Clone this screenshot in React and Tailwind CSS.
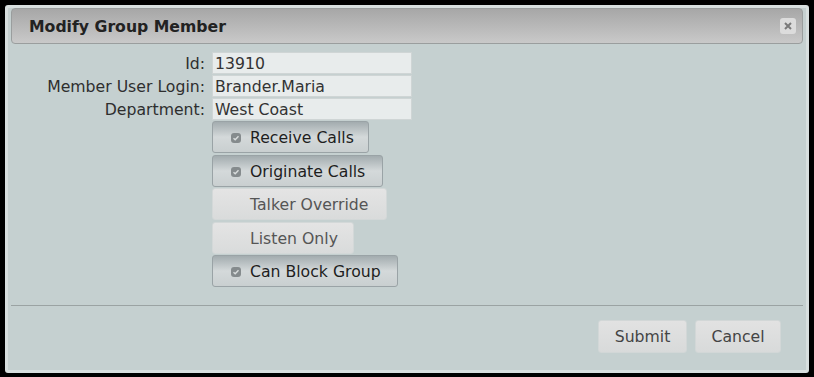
import React from "react";

const font = { fontFamily: '"DejaVu Sans", Verdana, sans-serif' };

function CheckIcon() {
  return (
    <span className="flex h-[10px] w-[10px] items-center justify-center rounded-[3px] bg-[#858b8d]">
      <svg width="8" height="8" viewBox="0 0 8 8">
        <path d="M1.5 4.2 L3.2 5.8 L6.5 2.2" stroke="#d9dddd" strokeWidth="1.4" fill="none" />
      </svg>
    </span>
  );
}

function Toggle({ label, active, width }) {
  return (
    <div
      className={
        "flex h-[32px] items-center rounded-[3px] border pl-[18px] pt-[2px] " +
        (active
          ? "border-[#9aa3a6] bg-gradient-to-b from-[#a3acaf] via-[#d4d9da] to-[#c9cfd0] text-[#1e1e1e]"
          : "border-[#d3d8d8] bg-gradient-to-b from-[#e4e4e4] to-[#d9dbdb] text-[#555]")
      }
      style={{ width }}
    >
      <span className="w-[10px]">{active && <CheckIcon />}</span>
      <span className="ml-[9px]">{label}</span>
    </div>
  );
}

const fields = [
  ["Id:", "13910"],
  ["Member User Login:", "Brander.Maria"],
  ["Department:", "West Coast"],
];

const toggles = [
  ["Receive Calls", true, 157],
  ["Originate Calls", true, 171],
  ["Talker Override", false, 175],
  ["Listen Only", false, 142],
  ["Can Block Group", true, 186],
];

export default function App() {
  return (
    <div className="h-[377px] w-[814px] bg-black pl-[5px] pt-[5px]" style={font}>
      <div className="flex h-[368px] w-[804px] flex-col rounded-[3px] border-[3px] border-[#d8dfdf] bg-[#c5d0d0] px-[3px] text-[15.7px]">
        <div className="flex h-[36px] items-center justify-between rounded-[4px] border border-[#9a9e9e] bg-gradient-to-b from-[#a7a7a7] to-[#c9c9c9] pl-[17px] pr-[6px]">
          <span className="pt-[1px] font-bold text-[#222]">Modify Group Member</span>
          <span className="flex h-[16px] w-[16px] items-center justify-center rounded-[3px] bg-[#dcdcdc]">
            <svg width="8" height="8" viewBox="0 0 8 8">
              <path d="M1 1 L7 7 M7 1 L1 7" stroke="#7a7a7a" strokeWidth="2" />
            </svg>
          </span>
        </div>

        <div className="mt-[8px] flex flex-col gap-[1px]">
          {fields.map(([label, value]) => (
            <div key={label} className="flex h-[22px] items-center pt-[2px]">
              <span className="w-[194px] text-right text-[#2e2e2e]">{label}</span>
              <span className="ml-[7px] -mt-[2px] flex h-[22px] w-[200px] items-center border border-[#cfd5d5] bg-[#e8ecec] pl-[2px] pt-[2px] text-[#333]">
                {value}
              </span>
            </div>
          ))}
        </div>

        <div className="ml-[201px] mt-[1px] flex flex-col gap-[1.5px]">
          {toggles.map(([label, active, width]) => (
            <Toggle key={label} label={label} active={active} width={width} />
          ))}
        </div>

        <div className="mt-[18px] border-t border-[#9ba3a3]" />

        <div className="mt-[14px] flex justify-end gap-[8px] pr-[22px]">
          <button className="h-[33px] w-[89px] rounded-[3px] border border-[#d2d7d7] bg-gradient-to-b from-[#e2e2e2] to-[#d8dada] pt-[1px] text-[#444]">
            Submit
          </button>
          <button className="h-[33px] w-[86px] rounded-[3px] border border-[#d2d7d7] bg-gradient-to-b from-[#e2e2e2] to-[#d8dada] pt-[1px] text-[#444]">
            Cancel
          </button>
        </div>
      </div>
    </div>
  );
}
